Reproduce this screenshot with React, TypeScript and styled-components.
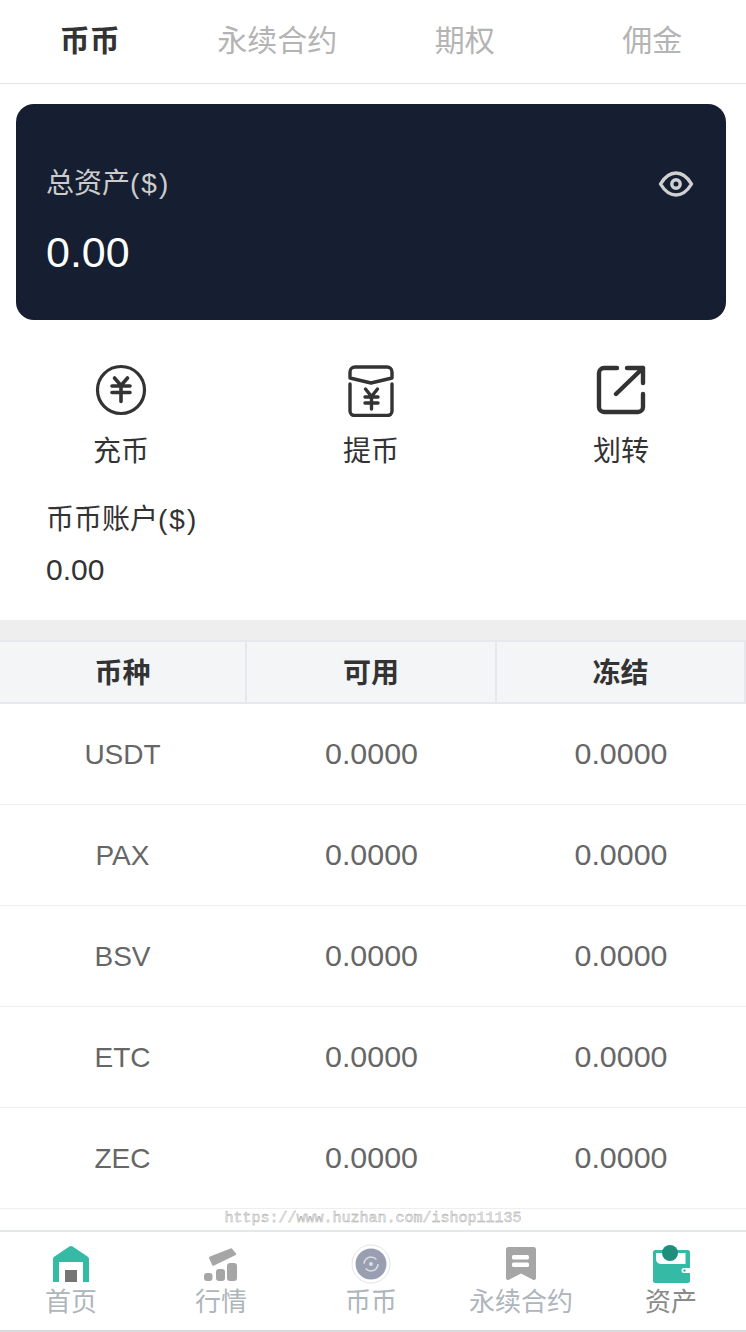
import React from 'react';
import styled, { createGlobalStyle } from 'styled-components';

const CJK = '"Liberation Sans", "Noto Sans CJK SC", sans-serif';

const GlobalStyle = createGlobalStyle`
  html, body {
    margin: 0;
    padding: 0;
    background: #fff;
    overflow: hidden;
  }
  * {
    box-sizing: border-box;
  }
`;

const TABS = ['币币', '永续合约', '期权', '佣金'];
const ACTIONS = [
  { label: '充币', icon: <DepositIcon /> },
  { label: '提币', icon: <WithdrawIcon /> },
  { label: '划转', icon: <TransferIcon /> },
];
const COINS = ['USDT', 'PAX', 'BSV', 'ETC', 'ZEC'];
const NAV = [
  { label: '首页', icon: <HomeIcon /> },
  { label: '行情', icon: <MarketIcon /> },
  { label: '币币', icon: <CoinIcon /> },
  { label: '永续合约', icon: <BookmarkIcon /> },
  { label: '资产', icon: <WalletIcon />, active: true },
];

function DepositIcon() {
  return (
    <svg width="52" height="52" viewBox="0 0 52 52" fill="none" stroke="#333" strokeWidth="3.2" strokeLinecap="round">
      <circle cx="26" cy="26" r="23.500" />
      <path d="M19.500 14l6.500 7.500 6.500-7.500M17 22h18M17 28.500h18M26 22v15.500" strokeWidth="3.600" />
    </svg>
  );
}

function WithdrawIcon() {
  return (
    <svg width="48" height="54" viewBox="0 -1 48 54" fill="none" stroke="#333" strokeWidth="3.4" strokeLinecap="round" strokeLinejoin="round">
      <path d="M3 8a5 5 0 0 1 5-5h32a5 5 0 0 1 5 5v6l-21 5-21-5z" />
      <path d="M3 20v27a4.500 4.500 0 0 0 4.500 4.500h33a4.500 4.500 0 0 0 4.500-4.500V20" />
      <path d="M18.500 25l6 7.500 6-7.500M18 33h13M18 39h13M24.500 33v12" strokeWidth="3.400" />
    </svg>
  );
}

function TransferIcon() {
  return (
    <svg width="50" height="50" viewBox="0 0 50 50" fill="none" stroke="#333" strokeWidth="4.400" strokeLinecap="round" strokeLinejoin="round">
      <path d="M21 3H8a5 5 0 0 0-5 5v34a5 5 0 0 0 5 5h34a5 5 0 0 0 5-5V29" />
      <path d="M31 3h16v15M47 3L20 29" />
    </svg>
  );
}

function EyeIcon() {
  return (
    <svg width="36" height="28" viewBox="0 0 36 28" fill="none" stroke="#d0d0d0" strokeWidth="3.4" strokeLinejoin="round">
      <path d="M2.500 14C7 6.500 12 3 18 3s11 3.500 15.500 11C29 21.500 24 25 18 25S7 21.500 2.500 14z" />
      <circle cx="18" cy="14" r="4.200" />
    </svg>
  );
}

function HomeIcon() {
  return (
    <svg width="36" height="36" viewBox="0 0 36 36">
      <path d="M0 36V13a3 3 0 0 1 1.200-2.300L16 .8a3.500 3.500 0 0 1 4 0l14.800 9.900a3 3 0 0 1 1.200 2.300v23z" fill="#35bba5" />
      <rect x="6" y="16" width="24" height="20" fill="#fff" />
      <rect x="12" y="24" width="12" height="12" fill="#757575" />
    </svg>
  );
}

function MarketIcon() {
  return (
    <svg width="34" height="35" viewBox="0 -2 34 35" fill="#a6a6a6">
      <path d="M6 8.500L26.500.5a1.500 1.500 0 0 1 1.800.5l3.700 4.500a1 1 0 0 1-.3 1.500L10 17.500a1.500 1.500 0 0 1-1.800-.4L5.300 10.700A1.500 1.500 0 0 1 6 8.500z" />
      <rect x="0" y="25" width="8.500" height="8" rx="3" />
      <rect x="12" y="21" width="9" height="12" rx="3" />
      <rect x="23" y="15" width="10" height="18" rx="3" />
    </svg>
  );
}

function CoinIcon() {
  return (
    <svg width="40" height="40" viewBox="0 0 40 40" fill="none">
      <circle cx="20" cy="20" r="19" fill="#fff" stroke="#e4e4e8" />
      <circle cx="20" cy="20" r="15.500" fill="#9a9eb1" />
      <circle cx="20" cy="20" r="7" stroke="#dcdee6" strokeWidth="1.500" strokeDasharray="17 5" />
      <circle cx="20" cy="20" r="2" fill="#dcdee6" />
    </svg>
  );
}

function BookmarkIcon() {
  return (
    <svg width="30" height="34" viewBox="0 0 30 34">
      <path d="M2.500 0h25A2.500 2.500 0 0 1 30 2.500V31a2 2 0 0 1-3 1.700l-12-6.200-12 6.200A2 2 0 0 1 0 31V2.500A2.500 2.500 0 0 1 2.500 0z" fill="#a6a6a6" />
      <rect x="6" y="8" width="17" height="4.500" rx="1.500" fill="#fff" />
      <rect x="6" y="15.500" width="17" height="4.500" rx="1.500" fill="#fff" />
    </svg>
  );
}

function WalletIcon() {
  return (
    <svg width="38" height="38" viewBox="0 0 38 38">
      <rect x="1" y="5" width="37" height="33" rx="2.500" fill="#35bba5" />
      <path d="M4 8h29.500v11H10q-6 0-6-5z" fill="#fff" />
      <path d="M38 23h-6a2.500 2.500 0 0 0 0 5h6z" fill="#fff" />
      <circle cx="32.500" cy="25.500" r="1.200" fill="#35bba5" />
      <circle cx="18" cy="8" r="8" fill="#1f8f7d" />
    </svg>
  );
}

const App = () => {
  return (
    <Page>
      <GlobalStyle />
      <TabBar>
        {TABS.map((tab, i) => (
          <Tab key={tab} $active={i === 0}>{tab}</Tab>
        ))}
      </TabBar>
      <AssetCard>
        <div>
          <CardLabel>总资产<Unit>($)</Unit></CardLabel>
          <CardValue>0.00</CardValue>
        </div>
        <EyeButton>
          <EyeIcon />
        </EyeButton>
      </AssetCard>
      <Actions>
        {ACTIONS.map((action) => (
          <Action key={action.label}>
            <ActionIcon>{action.icon}</ActionIcon>
            <span>{action.label}</span>
          </Action>
        ))}
      </Actions>
      <Account>
        <AccountLabel>币币账户<Unit>($)</Unit></AccountLabel>
        <AccountValue>0.00</AccountValue>
      </Account>
      <Divider />
      <TableHead>
        <HeadCell>币种</HeadCell>
        <HeadCell>可用</HeadCell>
        <HeadCell>冻结</HeadCell>
      </TableHead>
      {COINS.map((coin) => (
        <Row key={coin}>
          <CoinName>{coin}</CoinName>
          <Amount>0.0000</Amount>
          <Amount>0.0000</Amount>
        </Row>
      ))}
      <Watermark>https://www.huzhan.com/ishop11135</Watermark>
      <BottomNav>
        {NAV.map((item) => (
          <NavItem key={item.label} $active={item.active}>
            <NavIcon>{item.icon}</NavIcon>
            <span>{item.label}</span>
          </NavItem>
        ))}
      </BottomNav>
    </Page>
  );
};

const COLUMNS = '247px 250px 249px';

const Page = styled.div`
  width: 746px;
  height: 1332px;
  overflow: hidden;
  font-family: ${CJK};
  background: #fff;
`;

const TabBar = styled.nav`
  display: grid;
  grid-template-columns: repeat(4, 187.5px);
  height: 84px;
  margin-left: -4px;
  border-bottom: 1px solid #e6e6e6;
`;

const Tab = styled.div<{ $active?: boolean }>`
  display: flex;
  align-items: center;
  justify-content: center;
  padding-bottom: 8px;
  font-size: 30px;
  font-weight: ${({ $active }) => ($active ? 700 : 400)};
  color: ${({ $active }) => ($active ? '#333' : '#b4b4b4')};
`;

const AssetCard = styled.section`
  display: flex;
  justify-content: space-between;
  align-items: flex-start;
  height: 216px;
  margin: 20px 20px 0 16px;
  padding: 60px 32px 0 30px;
  border-radius: 18px;
  background: #161f32;
`;

const EyeButton = styled.div`
  margin-top: 6px;
`;

const Unit = styled.span`
  letter-spacing: 2px;
`;

const CardLabel = styled.div`
  font-size: 28px;
  line-height: 40px;
  color: #ccc;
`;

const CardValue = styled.div`
  margin-top: 26px;
  font-size: 43px;
  line-height: 44px;
  color: #fff;
`;

const Actions = styled.div`
  display: grid;
  grid-template-columns: repeat(3, 250px);
  margin: 43px 0 0 -4px;
`;

const Action = styled.div`
  display: flex;
  flex-direction: column;
  align-items: center;
  font-size: 28px;
  line-height: 40px;
  color: #333;
`;

const ActionIcon = styled.div`
  display: flex;
  align-items: center;
  justify-content: center;
  height: 54px;
  margin-bottom: 15px;
`;

const Account = styled.div`
  height: 148px;
  padding: 28px 0 0 46px;
  color: #333;
`;

const AccountLabel = styled.div`
  font-size: 28px;
  line-height: 40px;
`;

const AccountValue = styled.div`
  margin-top: 10px;
  font-size: 30px;
  line-height: 40px;
`;

const Divider = styled.div`
  height: 20px;
  background: #eee;
`;

const TableHead = styled.div`
  display: grid;
  grid-template-columns: ${COLUMNS};
  height: 64px;
  background: #f4f5f7;
  border-top: 2px solid #e6e8ee;
  border-bottom: 2px solid #e6e8ee;
`;

const HeadCell = styled.div`
  display: flex;
  align-items: center;
  justify-content: center;
  padding-bottom: 2px;
  border-right: 2px solid #e6e8ee;
  font-size: 28px;
  font-weight: 700;
  color: #333;
`;

const Row = styled.div`
  display: grid;
  grid-template-columns: ${COLUMNS};
  height: 101px;
  border-bottom: 1px solid #eee;
  align-items: center;
  text-align: center;
  color: #666;
`;

const CoinName = styled.div`
  padding: 2px 2px 0 0;
  font-size: 28px;
`;

const Amount = styled.div`
  padding: 0 1px 2px 0;
  font-size: 30.400px;
`;

const Watermark = styled.div`
  height: 21px;
  text-align: center;
  font-family: "Liberation Mono", monospace;
  font-size: 15px;
  line-height: 20px;
  color: #f0f0f0;
  -webkit-text-stroke: 0.400px #a0a0a0;
`;

const BottomNav = styled.nav`
  display: grid;
  grid-template-columns: repeat(5, 150px);
  height: 102px;
  margin-left: -4px;
  padding-top: 12px;
  border-top: 2px solid #e4e6ee;
  border-bottom: 2px solid #d8dade;
`;

const NavItem = styled.div<{ $active?: boolean }>`
  display: flex;
  flex-direction: column;
  align-items: center;
  font-size: 26px;
  line-height: 38px;
  color: ${({ $active }) => ($active ? '#8a8a8a' : '#aeb5bd')};
`;

const NavIcon = styled.div`
  display: flex;
  align-items: center;
  justify-content: center;
  height: 39px;
  flex: none;
`;

export default App;
